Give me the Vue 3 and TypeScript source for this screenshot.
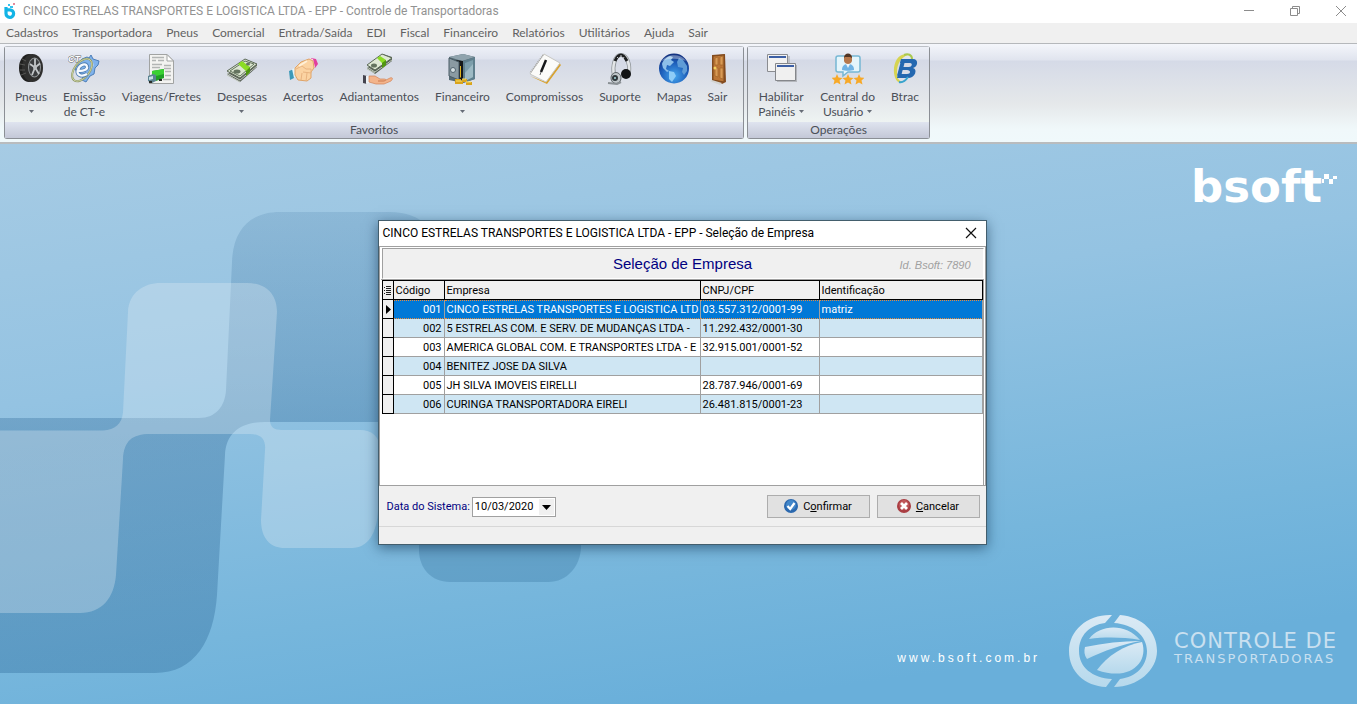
<script setup lang="ts">
import { ref } from 'vue'

interface Tool {
  icon: string
  lines: string[]
  arrow?: 'below' | 'inline'
}

interface Company {
  code: string
  name: string
  cnpj: string
  ident: string
}

const menus: string[] = [
  'Cadastros', 'Transportadora', 'Pneus', 'Comercial', 'Entrada/Saída', 'EDI',
  'Fiscal', 'Financeiro', 'Relatórios', 'Utilitários', 'Ajuda', 'Sair',
]

const groups: { title: string; tools: Tool[] }[] = [
  {
    title: 'Favoritos',
    tools: [
      { icon: 'tyre', lines: ['Pneus'], arrow: 'below' },
      { icon: 'cte', lines: ['Emissão', 'de CT-e'] },
      { icon: 'trips', lines: ['Viagens/Fretes'] },
      { icon: 'money', lines: ['Despesas'], arrow: 'below' },
      { icon: 'hands', lines: ['Acertos'] },
      { icon: 'advance', lines: ['Adiantamentos'] },
      { icon: 'safe', lines: ['Financeiro'], arrow: 'below' },
      { icon: 'notebook', lines: ['Compromissos'] },
      { icon: 'headset', lines: ['Suporte'] },
      { icon: 'globe', lines: ['Mapas'] },
      { icon: 'door', lines: ['Sair'] },
    ],
  },
  {
    title: 'Operações',
    tools: [
      { icon: 'windows', lines: ['Habilitar', 'Painéis'], arrow: 'inline' },
      { icon: 'user', lines: ['Central do', 'Usuário'], arrow: 'inline' },
      { icon: 'btrac', lines: ['Btrac'] },
    ],
  },
]

const companies: Company[] = [
  { code: '001', name: 'CINCO ESTRELAS TRANSPORTES E LOGISTICA LTD', cnpj: '03.557.312/0001-99', ident: 'matriz' },
  { code: '002', name: '5 ESTRELAS COM. E SERV. DE MUDANÇAS LTDA -', cnpj: '11.292.432/0001-30', ident: '' },
  { code: '003', name: 'AMERICA GLOBAL COM. E TRANSPORTES LTDA - E', cnpj: '32.915.001/0001-52', ident: '' },
  { code: '004', name: 'BENITEZ JOSE DA SILVA', cnpj: '', ident: '' },
  { code: '005', name: 'JH SILVA IMOVEIS EIRELLI', cnpj: '28.787.946/0001-69', ident: '' },
  { code: '006', name: 'CURINGA TRANSPORTADORA EIRELI', cnpj: '26.481.815/0001-23', ident: '' },
]

const selected = ref('001')
const systemDate = ref('10/03/2020')
</script>

<template>
  <div class="app">
    <header class="titlebar">
      <svg class="app-icon" width="12" height="16" viewBox="0 0 12 16" aria-hidden="true">
        <path d="M2 4v6.500a3.800 3.800 0 1 0 3.800-3.700h-3" fill="none" stroke="#12b4e6" stroke-width="3.200" />
        <path d="M4 1h2v2h-2zM6 3h3v2h-3z" fill="#35c3ee" />
        <path d="M9 0h2v2h-2z" fill="#e58a9b" />
      </svg>
      <h1 class="app-title">CINCO ESTRELAS TRANSPORTES E LOGISTICA LTDA - EPP - Controle de Transportadoras</h1>
      <div class="window-buttons">
        <button type="button" aria-label="Minimizar">
          <svg width="12" height="12" viewBox="0 0 12 12"><path d="M1 5.500h10" stroke="#8c8c8c" /></svg>
        </button>
        <button type="button" aria-label="Restaurar">
          <svg width="12" height="12" viewBox="0 0 12 12"><path d="M1.500 3.500h7v7h-7zM3.500 3.500v-2h7v7h-2" fill="none" stroke="#8c8c8c" /></svg>
        </button>
        <button type="button" aria-label="Fechar">
          <svg width="12" height="12" viewBox="0 0 12 12"><path d="M1 1l10 10M11 1L1 11" fill="none" stroke="#8c8c8c" /></svg>
        </button>
      </div>
    </header>

    <nav class="menubar">
      <button v-for="m in menus" :key="m" type="button">{{ m }}</button>
    </nav>

    <div class="ribbon">
      <section v-for="g in groups" :key="g.title" class="group">
        <div class="tools">
          <button v-for="t in g.tools" :key="t.icon" type="button" class="tool">
            <svg class="tool-icon" width="32" height="32" viewBox="0 0 32 32" aria-hidden="true">
              <g v-if="t.icon === 'tyre'">
                <ellipse cx="14" cy="15" rx="10" ry="14" fill="#20201f" />
                <ellipse cx="17.500" cy="15" rx="10.500" ry="14" fill="#2f2f2e" />
                <path d="M7 6l4 2M5 11l5 1M5 17l5 0M6 22l5-2" stroke="#565654" />
                <ellipse cx="19.500" cy="14.500" rx="6.500" ry="10" fill="#8e9294" />
                <ellipse cx="19.500" cy="14.500" rx="5.500" ry="9" fill="#3b3d3f" />
                <path d="M20 14.500V5.500M20 14.500l5-4M20 14.500l4 6.500M20 14.500l-3 7.500M20 14.500l-5-3.500" stroke="#c3c7c9" stroke-width="1.800" />
                <circle cx="20" cy="14.500" r="2" fill="#b9bdc0" />
              </g>
              <g v-else-if="t.icon === 'cte'">
                <path d="M14 6l5-2 2 1 2-3 2 4 6 2-1 4-3 3-1 6-4 2-4 6-4-2 1-4-6-3-2-5z" fill="#7fb2ec" stroke="#4d7fb8" />
                <path d="M23 7l2 5-3 6" fill="none" stroke="#a9cdf3" stroke-width="2" />
                <ellipse cx="14" cy="17" rx="13" ry="7.500" transform="rotate(-52 14 17)" fill="none" stroke="#8e9668" stroke-width="2" />
                <ellipse cx="14" cy="17" rx="13" ry="7.500" transform="rotate(-52 14 17)" fill="none" stroke="#d3dba8" stroke-width=".8" />
                <path d="M10 17.500c5 1 10-1 9-4-1-3.500-7-2.500-9 3-2 5 3 8 9 4.500" fill="none" stroke="#4e7caf" stroke-width="4" />
                <path d="M10 17.500c5 1 10-1 9-4-1-3.500-7-2.500-9 3-2 5 3 8 9 4.500" fill="none" stroke="#f6faff" stroke-width="2.300" />
                <text x="0" y="9" class="cte-mark">CT</text>
              </g>
              <g v-else-if="t.icon === 'trips'">
                <path d="M4.500 1.500h17.500l6.500 6.500v22.500h-24z" fill="#f3f3f1" stroke="#a1a3a2" />
                <path d="M22 1.500v6.500h6.500z" fill="#fff" stroke="#a1a3a2" />
                <path d="M7 4.500h12M7 7.500h4M13 7.500h6M7 11.500h10M7 14.500h8M19 12.500h7M19 15.500h7M20 18.500h6M20 22.500h6M18 26.500h8" stroke="#b2b5b4" stroke-width="1.500" />
                <path d="M7 18l12-2v9l-8 3-4-2z" fill="#1f9f26" />
                <path d="M7 18l12-2v5l-12 3z" fill="#3ad033" />
                <path d="M3 23l5-2 3 1v6l-4 2-4-2z" fill="#5b8391" />
                <path d="M4 24l4-1v3l-4 1z" fill="#cae0e6" />
                <path d="M4 28h3v2h-3zM14 26h3v2h-3z" fill="#292e29" />
              </g>
              <g v-else-if="t.icon === 'money'">
                <path d="M1 21l13 8 17-15v-3l-10-4z" fill="#586057" />
                <path d="M1 18l13 7L31 11 19 6z" fill="#dce6d1" stroke="#5d6a58" />
                <path d="M4 18l10 5L28 11l-9-3z" fill="none" stroke="#62735c" />
                <path d="M1 20l13 7 17-14M1 22l13 7" fill="none" stroke="#bec6b9" />
                <path d="M12 11l4-3 8 6v5l-4 4v-5z" fill="#8bdc24" />
                <path d="M20 18l4-4v5l-4 4z" fill="#509512" />
                <ellipse cx="11" cy="18.500" rx="3.500" ry="2" fill="#64745f" />
                <ellipse cx="22" cy="11" rx="2" ry="1.500" fill="#64745f" />
              </g>
              <g v-else-if="t.icon === 'hands'">
                <path d="M24 5l5 1 2 5-3 4-4-5z" fill="#e23e9d" />
                <path d="M22 5l4 1 2 8-3 2z" fill="#fbd8e7" />
                <path d="M2 18l5-2 2 8-6 3z" fill="#3d9ab8" />
                <path d="M5 16l3-1 2 9-3 1z" fill="#e2f5fc" />
                <path d="M8 15l6-6 8-3 4 2 1 7-3 4v6l-4 3-9-1-3-5z" fill="#fbd3a2" stroke="#dfa468" />
                <path d="M9 16l6-3 4 3h5v4l-8-1M20 20l-1 8M15 20l-1 7" fill="none" stroke="#e8b380" />
                <path d="M12 13l8-5" stroke="#fff0d8" stroke-width="2" />
              </g>
              <g v-else-if="t.icon === 'advance'">
                <path d="M4 15l8 6 17-13v-4l-9-3z" fill="#566055" />
                <path d="M4 12l8 5L29 5l-10-4z" fill="#dfe9d4" stroke="#5b6957" />
                <path d="M4 14l8 5L29 7M4 16l8 4" fill="none" stroke="#bdc6b7" />
                <path d="M14 5l3-2 6 4v5l-4 3v-5z" fill="#8bdc24" />
                <path d="M19 10l4-3v5l-4 3z" fill="#509512" />
                <ellipse cx="11" cy="12.500" rx="3" ry="2" fill="#64745f" />
                <path d="M0 22l4 1v8l-4-1z" fill="#45444f" />
                <path d="M3 23h3v7l-3 1z" fill="#edf3f7" />
                <path d="M6 23h6l5 3h4c3 0 2 2-1 2h-5 6l6-3c3-1 3 1 1 3l-7 3H13l-7-2z" fill="#f3b48b" stroke="#d18258" stroke-width=".7" />
              </g>
              <g v-else-if="t.icon === 'safe'">
                <path d="M3 4L17 1l12 3v22l-12 4-14-3z" fill="#566a74" />
                <path d="M3 4L17 1l12 3-13 4z" fill="#8fa3ad" />
                <path d="M17 8l12-4v22l-12 4z" fill="#5f7f8d" />
                <path d="M19 10l8-3v17l-8 4z" fill="#7c9eab" />
                <path d="M19 20l8-9v13l-8 4z" fill="#9dbac4" />
                <path d="M10 7l7 1v20l-7-3z" fill="#16191a" />
                <path d="M3 5l10 4v18l-10-4z" fill="#8a9aa2" stroke="#485b65" />
                <path d="M14 13l1 0v12l-1-1z" fill="#e0b520" />
                <circle cx="7" cy="17" r="2.500" fill="#d4dee2" stroke="#53656f" />
                <path d="M9 26h6v2H9zM9 28h8v3h-8zM16 26h5v3h-5zM20 29h6v3h-6z" fill="#d9a41c" />
                <path d="M10 28h6M16 26h4M20 29h5" stroke="#fae36a" />
              </g>
              <g v-else-if="t.icon === 'notebook'">
                <path d="M1 23l17 8 14-19-2-2-16 18z" fill="#d9a22c" />
                <path d="M15 1l16 9-14 19-16-8z" fill="#fbfbf9" stroke="#c7c7c3" />
                <path d="M14 2L1 20" stroke="#a3a3a0" stroke-width="1.500" stroke-dasharray="1 1" />
                <path d="M17 7l-5 12" stroke="#17191b" stroke-width="2.500" />
                <path d="M12 19l-1 3" stroke="#696b6d" />
              </g>
              <g v-else-if="t.icon === 'headset'">
                <path d="M10 22C8 13 11 2 17 2s9 9 8 17" fill="none" stroke="#8d9397" stroke-width="4" />
                <path d="M10 22C8 13 11 2 17 2s9 9 8 17" fill="none" stroke="#e3e6e8" stroke-width="2.500" />
                <path d="M11 8c2-5 4-6 6-6s4 2 6 6" fill="none" stroke="#1d1f20" stroke-width="3" />
                <path d="M13 4l2 2M17 2v2M20 4l-1 2" stroke="#c7cbce" />
                <ellipse cx="12" cy="25" rx="5" ry="5.500" fill="#c1c7ca" stroke="#5b6266" />
                <circle cx="11" cy="25" r="3" fill="#30383c" />
                <circle cx="11" cy="25" r="1" fill="#a9d8dc" />
                <circle cx="22" cy="21" r="5" fill="#111314" />
                <path d="M4 30l9 1 4-2" fill="none" stroke="#8b9195" stroke-width="2" />
              </g>
              <g v-else-if="t.icon === 'globe'">
                <defs>
                  <radialGradient id="sea" cx=".5" cy=".75" r=".75">
                    <stop offset="0" stop-color="#46a8f0" />
                    <stop offset=".6" stop-color="#1c5cb8" />
                    <stop offset="1" stop-color="#132f7c" />
                  </radialGradient>
                </defs>
                <circle cx="16" cy="15.500" r="15" fill="url(#sea)" />
                <path d="M4 11c1-4 5-7 8-8l3 1-2 3 3 2-4 4-3-1-1 4 3 2-2 1-4-4z" fill="#8dbfe9" />
                <path d="M11 18l5 1 2 4-4 6-3-3z" fill="#8dccf7" />
                <path d="M21 5l4 2 4 6v5l-3 4-2-3 1-4-5-1-1-5z" fill="#5f9cd6" />
                <path d="M4 8c5-7 18-8 24 0-7-3-17-3-24 0z" fill="#fff" fill-opacity=".35" />
              </g>
              <g v-else-if="t.icon === 'door'">
                <path d="M11 2l13-1 1 28-4 2-10-3z" fill="#864d20" />
                <path d="M12 3l11-1v27l-11-2z" fill="#bd7637" stroke="#7e4a1e" />
                <path d="M14 5l3-1v8h-3zM19 4l3-1v9h-3zM14 15h3v9l-3-1zM19 15h3v11l-3-1z" fill="#d99a55" stroke="#a2662a" stroke-width=".7" />
                <circle cx="14" cy="15" r="1.500" fill="#f4d15e" />
                <path d="M9 28l2-1 10 3-2 2z" fill="#d3d4d1" />
              </g>
              <g v-else-if="t.icon === 'windows'">
                <path d="M4 3h21v16H4z" fill="#969696" fill-opacity=".4" />
                <path d="M2.500 1.500h20v17h-20z" fill="#f2f2f2" stroke="#8a8c90" />
                <path d="M4 3h17v2H4z" fill="#3c5fa5" />
                <path d="M12 12h20v17H12z" fill="#777" fill-opacity=".4" />
                <path d="M10.500 10.500h20v17h-20z" fill="#f0f0f0" stroke="#85878b" />
                <path d="M12 12h17v2H12z" fill="#3c5fa5" />
              </g>
              <g v-else-if="t.icon === 'user'">
                <path d="M6 3h20q2 0 2 2v12q0 2-2 2H16l-5 4v-4H6q-2 0-2-2V5q0-2 2-2z" fill="#e5f5fb" stroke="#76b7d3" stroke-width="1.500" />
                <path d="M10 17c0-5 3-6 6-6s6 1 6 6c-3 1-9 1-12 0z" fill="#70b3e4" />
                <path d="M14 11l2 4 2-4z" fill="#eef7fc" />
                <path d="M12 4c1-4 7-4 8 0v4c-1 4-7 4-8 0z" fill="#b6784c" />
                <path d="M12 5c0-6 8-6 8 0l-2-1h-5z" fill="#503525" />
                <path v-for="x in [0, 11, 22]" :key="x" :d="`M${x + 5} 21l1.500 3.500 4 .4-3 2.600 1 4-3.500-2-3.500 2 1-4-3-2.600 4-.4z`" fill="#f7a928" />
              </g>
              <g v-else>
                <path d="M19 2C10-1 4 9 5 20c1 8 5 11 9 9-5-1-6-5-6-10C8 11 12 4 19 2z" fill="#d6d451" />
                <path d="M15 2c4-2 8 0 8 4" fill="none" stroke="#a9c84f" stroke-width="2" />
                <path d="M12 6h12c6 0 5 8 0 9 5 1 2 10-4 10H8l1-4h9c4 0 4-4 0-4H10l1-3h9c3 0 4-4 1-4H11z" fill="#2468b0" />
                <path d="M14 8l-4 15" stroke="#2468b0" stroke-width="4" />
                <path d="M10 29c4 1 7-2 9-5" fill="none" stroke="#38a4cf" stroke-width="2" />
              </g>
            </svg>
            <span v-for="(line, i) in t.lines" :key="line" class="tool-line">
              {{ line }}
              <svg v-if="t.arrow === 'inline' && i === t.lines.length - 1" width="5" height="3" viewBox="0 0 5 3"><path d="M0 0h5L2.500 3z" fill="#666c76" /></svg>
            </span>
            <svg v-if="t.arrow === 'below'" class="arrow-below" width="5" height="3" viewBox="0 0 5 3"><path d="M0 0h5L2.500 3z" fill="#666c76" /></svg>
          </button>
        </div>
        <h2 class="group-title">{{ g.title }}</h2>
      </section>
    </div>

    <main class="desktop">
      <svg class="wallpaper" viewBox="0 144 1357 560" preserveAspectRatio="xMinYMin slice" aria-hidden="true">
        <defs>
          <linearGradient id="shade" x1="0" y1="212" x2="0" y2="440" gradientUnits="userSpaceOnUse">
            <stop offset="0" stop-color="#1e5a8c" stop-opacity=".14" />
            <stop offset="1" stop-color="#1e5a8c" stop-opacity=".3" />
          </linearGradient>
        </defs>
        <path
          d="M0 418H199C216 418 225 406 226 390L232 262C233 230 250 212 280 212H390C425 212 440 235 440 262V422H265C242 422 226 432 225 455L217 595C214 640 195 673 155 673H0z"
          fill="url(#shade)"
        />
        <path d="M419 480H581V546C581 566 567 582 548 582H450C431 582 419 568 419 550z" fill="#1e5a8c" fill-opacity=".24" />
        <path
          d="M0 430.500H103C115 430 122 424 123 412L128 312C129 293 143 283 161 283H247C266 283 277 294 277 312L270 420C270 427 274 430 282 430H360C372 430 380 437 380 449L378 510C377 533 368 548 352 548H285C270 548 261 538 261 520L265 450C266 439 261 434 250 434H150C132 434 124 441 123 459L116 575C114 598 102 613 80 613H0z"
          fill="#e4eef5"
          fill-opacity=".31"
        />
      </svg>

      <div class="brand">
        <span class="brand-name">bsoft</span>
        <svg class="brand-dots" width="15" height="16" viewBox="0 0 15 16" aria-hidden="true">
          <path d="M2 1h5v5h-5zM7 6h4v5h-4zM11 3h4v3h-4zM0 6h2v4h-2z" fill="#fff" />
        </svg>
      </div>

      <footer class="signature">
        <a class="site" href="#">www.bsoft.com.br</a>
        <svg class="emblem" width="90" height="74" viewBox="0 0 90 74" aria-hidden="true">
          <defs>
            <linearGradient id="ice" x1="0" y1="0" x2="0" y2="1">
              <stop offset="0" stop-color="#dbeaf5" />
              <stop offset="1" stop-color="#b6d9ec" />
            </linearGradient>
          </defs>
          <path d="M44 1C20 0 1 16 1 37s16 35 37 36l6-8C24 64 11 53 11 37S22 11 37 9z" fill="url(#ice)" />
          <path d="M52 1C75 3 89 18 89 37S70 73 46 73l6-8C68 63 79 52 79 37S65 10 46 9z" fill="url(#ice)" />
          <path d="M21 25C32 10 58 9 72 26C54 23 37 23 21 25z" fill="url(#ice)" />
          <path d="M17 33C36 29 54 27 73 27C54 30 36 37 19 45C16 41 16 37 17 33z" fill="url(#ice)" />
          <path d="M29 56C39 42 56 31 74 28C81 48 62 68 29 56z" fill="url(#ice)" />
        </svg>
        <p class="product">
          <span class="product-top">CONTROLE DE</span>
          <span class="product-bottom">TRANSPORTADORAS</span>
        </p>
      </footer>

      <section class="dialog" role="dialog" aria-labelledby="dialog-title">
        <header class="dialog-bar">
          <h2 id="dialog-title">CINCO ESTRELAS TRANSPORTES E LOGISTICA LTDA - EPP - Seleção de Empresa</h2>
          <button type="button" aria-label="Fechar">
            <svg width="12" height="12" viewBox="0 0 12 12"><path d="M1 1l10 10M11 1L1 11" fill="none" stroke="#111" stroke-width="1.200" /></svg>
          </button>
        </header>

        <div class="dialog-body">
          <div class="panel-head">
            <h3>Seleção de Empresa</h3>
            <span class="panel-id">Id. Bsoft: 7890</span>
          </div>
          <div class="grid-area">
            <table>
              <colgroup>
                <col class="c-mark" /><col class="c-code" /><col class="c-name" /><col class="c-cnpj" /><col />
              </colgroup>
              <thead>
                <tr>
                  <th class="mark" aria-label="Seleção">
                    <svg width="8" height="9" viewBox="0 0 8 9"><path d="M0 1.500h1M0 4.500h1M0 7.500h1M2 .5h5M2 2.500h5M2 4.500h5M2 6.500h5M2 8.500h5" stroke="#222" /></svg>
                  </th>
                  <th>Código</th>
                  <th>Empresa</th>
                  <th>CNPJ/CPF</th>
                  <th>Identificação</th>
                </tr>
              </thead>
              <tbody>
                <tr v-for="c in companies" :key="c.code" :class="{ current: c.code === selected }" @click="selected = c.code">
                  <td class="mark">
                    <svg v-if="c.code === selected" width="5" height="9" viewBox="0 0 5 9"><path d="M0 0l5 4.500L0 9z" fill="#000" /></svg>
                  </td>
                  <td class="code">{{ c.code }}</td>
                  <td>{{ c.name }}</td>
                  <td>{{ c.cnpj }}</td>
                  <td>{{ c.ident }}</td>
                </tr>
              </tbody>
            </table>
          </div>
        </div>

        <div class="dialog-actions">
          <label for="system-date">Data do Sistema:</label>
          <div class="date-box">
            <select id="system-date" v-model="systemDate">
              <option>10/03/2020</option>
            </select>
            <span class="drop"><svg width="9" height="5" viewBox="0 0 9 5"><path d="M0 0h9L4.500 5z" fill="#000" /></svg></span>
          </div>
          <button type="button" class="action">
            <svg width="14" height="14" viewBox="0 0 14 14" aria-hidden="true">
              <circle cx="7" cy="7" r="7" fill="#2b68ae" />
              <circle cx="7" cy="6" r="5" fill="#4287ca" />
              <path d="M3.500 7l2.700 3L10.500 4" fill="none" stroke="#fff" stroke-width="2.200" />
            </svg>
            <span>C<u>o</u>nfirmar</span>
          </button>
          <button type="button" class="action">
            <svg width="14" height="14" viewBox="0 0 14 14" aria-hidden="true">
              <circle cx="7" cy="7" r="7" fill="#aa3e43" />
              <circle cx="7" cy="6" r="5" fill="#c0575a" />
              <path d="M4 4l6 6M10 4l-6 6" stroke="#fff" stroke-width="2.800" />
            </svg>
            <span><u>C</u>ancelar</span>
          </button>
        </div>
        <div class="dialog-status"></div>
      </section>
    </main>
  </div>
</template>

<style>
body {
  margin: 0;
}
</style>

<style scoped>
* {
  box-sizing: border-box;
}

.app {
  display: flex;
  flex-direction: column;
  min-height: 100vh;
  font: 12px/15px Lato, "Open Sans", sans-serif;
  color: #4b4f58;
}

h1, h2, h3, p {
  margin: 0;
  font: inherit;
}

button {
  margin: 0;
  padding: 0;
  border: 0;
  background: none;
  font: inherit;
  color: inherit;
}

svg {
  display: block;
}

.titlebar {
  display: flex;
  align-items: center;
  height: 23px;
  padding: 0 10px 2px 4px;
  background: #fff;
  font-family: Roboto, "Open Sans", sans-serif;
  color: #929292;
}

.app-title {
  flex: 1;
  padding: 2px 0 0 7px;
}

.window-buttons {
  display: flex;
  gap: 34px;
}

.menubar {
  display: flex;
  gap: 14px;
  height: 20px;
  padding: 0 0 2px 6px;
  background: #f0f0f0;
  color: #626262;
}

.ribbon {
  display: flex;
  gap: 3px;
  height: 101px;
  padding: 2px 4px 3px;
  border-top: 1px solid #b5b8bb;
  border-bottom: 2px solid #b9bcbe;
  background: linear-gradient(#f4f6fb 0, #e0e4ee 16px, #d5dae7 17px, #e5e8ea 60px, #f0f8fa 85px, #f0f9fb);
}

.group {
  display: flex;
  flex-direction: column;
  border: 1px solid #8b8f95;
  border-top-color: #bcc0c6;
  border-radius: 3px;
  box-shadow: inset 1px 1px #fff;
}

.tools {
  display: flex;
  flex: 1;
  padding: 0 2px;
  background: linear-gradient(#edf0f7 0, #dfe3ee 12px, #d4d9e6 13px, #e3e6ea 50px, #eef3f2);
}

.group:first-child .tools {
  padding-right: 8px;
}

.tool {
  display: flex;
  flex-direction: column;
  align-items: center;
  padding: 6px 8px 0;
}

.tool-icon {
  margin: 0 -8px 4px;
}

.tool-line {
  display: flex;
  align-items: center;
  gap: 4px;
  white-space: nowrap;
}

.arrow-below {
  margin-top: 6px;
}

.group-title {
  height: 16px;
  background: linear-gradient(#dfe4ef, #c4c8d7);
  line-height: 16px;
  text-align: center;
}

.cte-mark {
  font: italic bold 9px "Liberation Sans", sans-serif;
  fill: #fff;
  stroke: #666;
  stroke-width: 1px;
  paint-order: stroke;
}

.desktop {
  position: relative;
  display: flex;
  flex: 1;
  flex-direction: column;
  justify-content: space-between;
  align-items: flex-end;
  overflow: hidden;
  background: linear-gradient(172deg, #a6cbe4 0, #94c3e2 35%, #76b6dc 70%, #69afda 88%);
}

.wallpaper {
  position: absolute;
  inset: 0;
  width: 100%;
  height: 100%;
}

.brand {
  position: relative;
  display: flex;
  padding: 19px 20px 0 0;
  color: #fff;
}

.brand-name {
  font: bold 45px/48px "DejaVu Sans", sans-serif;
}

.brand-dots {
  margin-top: 10px;
}

.signature {
  position: relative;
  display: flex;
  align-items: center;
  padding: 0 20px 16px 0;
}

.site {
  margin: 14px 28px 0 0;
  font: 12px/15px "Liberation Sans", Arial, sans-serif;
  letter-spacing: 3px;
  color: #fff;
  text-decoration: none;
}

.product {
  display: flex;
  flex-direction: column;
  margin-left: 16px;
  padding-bottom: 4px;
  font-family: "DejaVu Sans", sans-serif;
  color: #c9e0f0;
}

.product-top {
  font-size: 21px;
  line-height: 20px;
  letter-spacing: 1px;
}

.product-bottom {
  font-size: 13px;
  line-height: 16px;
  letter-spacing: 2px;
}

.dialog {
  position: absolute;
  top: 76px;
  left: calc(50% - 301px);
  width: 609px;
  border: 1px solid #435e6d;
  background: #f0f0f0;
  box-shadow: 0 3px 12px rgba(10, 40, 70, 0.55);
  font: 11px/13px Roboto, "Liberation Sans", sans-serif;
  color: #000;
}

.dialog-bar {
  display: flex;
  justify-content: space-between;
  align-items: center;
  height: 25px;
  padding: 0 9px 1px 4px;
  background: #fff;
  font-size: 12px;
  line-height: 15px;
}

.dialog-body {
  padding: 1px 1px 0;
  border: 1px solid #a0a0a0;
  background: #fff;
}

.panel-head {
  display: grid;
  grid-template-columns: 1fr auto 1fr;
  align-items: center;
  height: 31px;
  margin: 0 0 0 1px;
  border: 1px solid #a0a0a0;
  border-right-color: #fff;
  border-bottom-color: #fff;
  background: #f0f0f0;
  font-family: "Liberation Sans", Arial, sans-serif;
}

.panel-head h3 {
  grid-column: 2;
  font-size: 15px;
  line-height: 18px;
  color: #000080;
}

.panel-id {
  justify-self: end;
  padding: 4px 12px 0 0;
  font-style: italic;
  color: #a0a0a0;
}

.grid-area {
  height: 206px;
  padding-left: 1px;
  border: 1px solid #a0a0a0;
  border-width: 1px 1px 0 0;
}

table {
  width: 100%;
  table-layout: fixed;
  border-spacing: 0;
  border-left: 1px solid #000;
}

.c-mark {
  width: 11px;
}

.c-code {
  width: 51px;
}

.c-name {
  width: 256px;
}

.c-cnpj {
  width: 119px;
}

th {
  height: 20px;
  padding: 0 2px;
  border: 1px solid #000;
  border-left: 0;
  background: #f0f0f0;
  font-weight: normal;
  text-align: left;
}

td {
  height: 19px;
  padding: 0 2px;
  border-right: 1px solid #a0a0a0;
  border-bottom: 1px solid #a0a0a0;
  overflow: hidden;
  white-space: nowrap;
}

.code {
  text-align: right;
}

th.mark,
td.mark {
  padding: 0 0 0 1px;
}

td.mark {
  padding-left: 3px;
  border-color: #000;
  background: #f0f0f0;
}

tbody tr:nth-child(even) td:not(.mark) {
  background: #cfe6f3;
}

tbody tr.current td:not(.mark) {
  border-top: 1px dotted #e88a3c;
  border-bottom: 1px dotted #e88a3c;
  background: #0078d7;
  color: #fff;
}

.dialog-actions {
  display: flex;
  align-items: center;
  gap: 7px;
  height: 40px;
  padding: 0 6px 0 8px;
}

.dialog-actions label {
  color: #000080;
}

.date-box {
  position: relative;
  width: 84px;
  margin: 2px auto 0 -5px;
}

.date-box select {
  display: block;
  width: 100%;
  height: 20px;
  padding: 0 0 2px 2px;
  border: 1px solid #a0a0a0;
  border-radius: 0;
  background: #fff;
  font: inherit;
  color: #000;
  appearance: none;
}

.drop {
  position: absolute;
  top: 2px;
  right: 2px;
  bottom: 2px;
  display: flex;
  justify-content: center;
  align-items: center;
  width: 15px;
  background: #f0f0f0;
  pointer-events: none;
}

.action {
  display: flex;
  justify-content: center;
  align-items: center;
  gap: 5px;
  width: 103px;
  height: 23px;
  border: 1px solid #adadad;
  background: #e1e1e1;
}

.dialog-status {
  height: 18px;
  border-top: 1px solid #d7d7d7;
}
</style>
